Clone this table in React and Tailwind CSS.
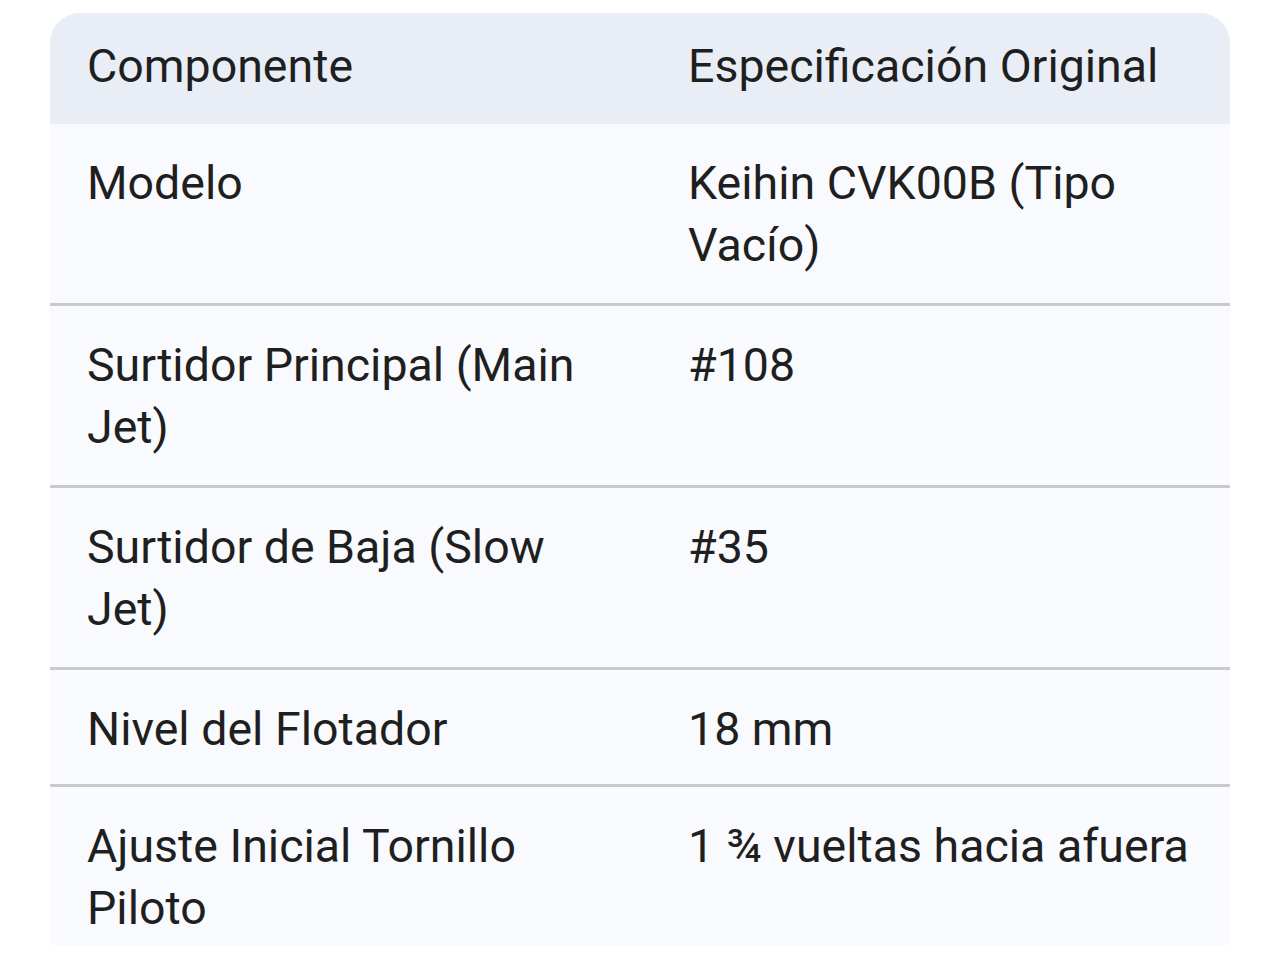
export default function App() {
  const rows = [
    ["Modelo", "Keihin CVK00B (Tipo Vacío)"],
    ["Surtidor Principal (Main Jet)", "#108"],
    ["Surtidor de Baja (Slow Jet)", "#35"],
    ["Nivel del Flotador", "18 mm"],
    ["Ajuste Inicial Tornillo Piloto", "1 ¾ vueltas hacia afuera"],
  ];
  return (
    <div className="w-[1280px] h-[960px] bg-white overflow-hidden pt-[13px] pl-[50px]" style={{ fontFamily: "Roboto, 'Open Sans', sans-serif" }}>
      <div className="w-[1180px] h-[932px] rounded-t-[30px] overflow-hidden bg-[#f8fafd] text-[#1f1f1f] text-[46.5px] leading-[62px]">
        <div className="flex bg-[#e9eef6] h-[111px] items-center pb-[6px]">
          <div className="w-[602px] pl-[37px] pr-[30px]">Componente</div>
          <div className="flex-1 pl-[36px] pr-[20px]">Especificación Original</div>
        </div>
        {rows.map(([a, b], i) => (
          <div key={i} className={"flex pt-[28px] " + (i === 3 ? "pb-[24px] " : "pb-[27px] ") + (i > 0 ? "border-t-[3px] border-[#c8cacc]" : "")}>
            <div className="w-[602px] pl-[37px] pr-[30px]">{a}</div>
            <div className="flex-1 pl-[36px] pr-[20px]">{b}</div>
          </div>
        ))}
      </div>
    </div>
  );
}
